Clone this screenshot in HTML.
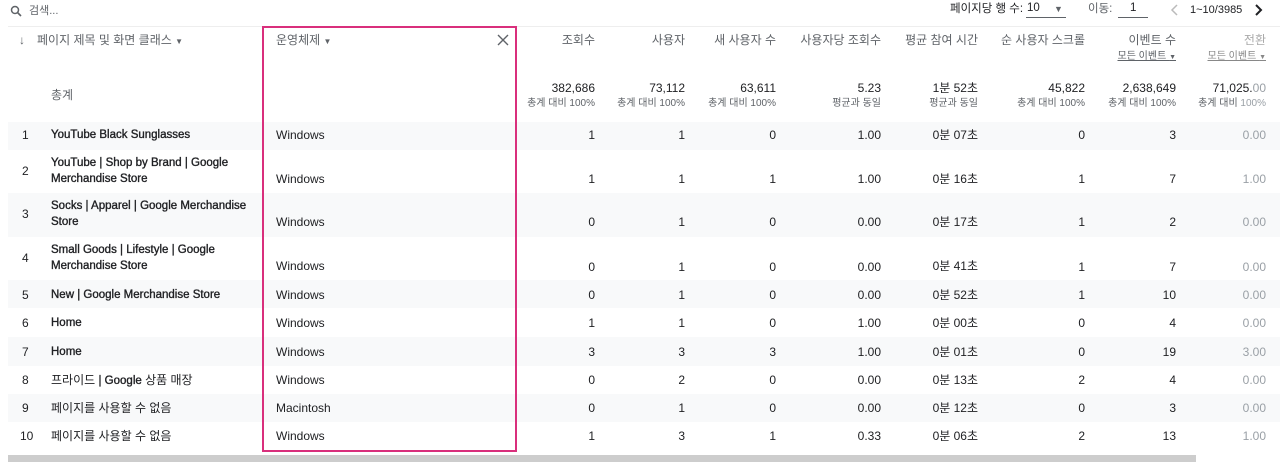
<!DOCTYPE html>
<html><head><meta charset="utf-8"><style>
*{margin:0;padding:0;box-sizing:border-box}
body{width:1280px;height:462px;overflow:hidden;background:#fff;font-family:"Liberation Sans","Noto Sans CJK KR",sans-serif;color:#202124;position:relative;font-size:12px}
.a{position:absolute;line-height:16px;white-space:nowrap}
.r{position:absolute;left:8px;width:1272px}
.g{background:#f8f9fa}
.h{color:#5f6368;font-size:12px}
.s{font-size:10px;color:#5f6368}
.l{color:#9aa0a6}
.b{font-weight:normal;font-size:11.5px;-webkit-text-stroke:0.35px #202124}
</style></head><body>
<svg class="a" style="left:10px;top:5px" width="12" height="12" viewBox="0 0 12 12"><circle cx="5" cy="5" r="3.5" fill="none" stroke="#5f6368" stroke-width="1.5"/><path d="M7.5 7.5L11 11" stroke="#5f6368" stroke-width="1.6"/></svg>
<div class="a h" style="left:29px;top:3px;font-size:11px">검색...</div>
<div class="a" style="left:950px;top:1px;font-size:11.5px">페이지당 행 수:</div>
<div class="a" style="left:1027px;top:0px;font-size:11.5px">10</div>
<div class="a" style="left:1026px;top:17px;width:40px;border-top:1px solid #5f6368"></div>
<div class="a" style="left:1054px;top:1px;font-size:9px;color:#5f6368">▼</div>
<div class="a" style="left:1088px;top:1px;font-size:11.5px;color:#5f6368">이동:</div>
<div class="a" style="left:1130px;top:0px;font-size:11.5px">1</div>
<div class="a" style="left:1118px;top:17px;width:30px;border-top:1px solid #5f6368"></div>
<svg class="a" style="left:1170px;top:4px" width="10" height="12" viewBox="0 0 10 12"><path d="M7 1L2 6L7 11" fill="none" stroke="#bbb" stroke-width="1.5"/></svg>
<div class="a" style="left:1190px;top:2px;font-size:11px">1~10/3985</div>
<svg class="a" style="left:1254px;top:4px" width="10" height="12" viewBox="0 0 10 12"><path d="M2 1L7 6L2 11" fill="none" stroke="#202124" stroke-width="2"/></svg>
<div class="a" style="left:8px;top:26px;width:1272px;border-top:1px solid #eee"></div>
<div class="r g" style="top:122px;height:28px"></div>
<div class="r g" style="top:193px;height:44px"></div>
<div class="r g" style="top:280px;height:28px"></div>
<div class="r g" style="top:337px;height:29px"></div>
<div class="r g" style="top:394px;height:28px"></div>
<div class="a h" style="left:19px;top:32px;font-size:12px;font-weight:bold">↓</div>
<div class="a h" style="left:37px;top:32px">페이지 제목 및 화면 클래스 <span style="font-size:8px">▼</span></div>
<div class="a h" style="left:276px;top:32px">운영체제 <span style="font-size:8px">▼</span></div>
<svg class="a" style="left:497px;top:34px" width="12" height="12" viewBox="0 0 12 12"><path d="M1 1L11 11M11 1L1 11" stroke="#5f6368" stroke-width="1.4"/></svg>
<div class="a h" style="right:685px;top:32px">조회수</div>
<div class="a h" style="right:595px;top:32px">사용자</div>
<div class="a h" style="right:504px;top:32px">새 사용자 수</div>
<div class="a h" style="right:399px;top:32px">사용자당 조회수</div>
<div class="a h" style="right:302px;top:32px">평균 참여 시간</div>
<div class="a h" style="right:195px;top:32px">순 사용자 스크롤</div>
<div class="a h" style="right:104px;top:32px">이벤트 수</div>
<div class="a h" style="right:14px;top:32px;color:#aaa">전환</div>
<div class="a s" style="right:104px;top:49px;text-decoration:underline">모든 이벤트 <span style="font-size:7px;text-decoration:none">▼</span></div>
<div class="a s" style="right:14px;top:49px;text-decoration:underline;color:#888">모든 이벤트 <span style="font-size:7px">▼</span></div>
<div class="a" style="left:51px;top:87px;color:#5f6368">총계</div>
<div class="a" style="right:685px;top:80px">382,686</div><div class="a s" style="right:685px;top:96px">총계 대비 100%</div>
<div class="a" style="right:595px;top:80px">73,112</div><div class="a s" style="right:595px;top:96px">총계 대비 100%</div>
<div class="a" style="right:504px;top:80px">63,611</div><div class="a s" style="right:504px;top:96px">총계 대비 100%</div>
<div class="a" style="right:399px;top:80px">5.23</div><div class="a s" style="right:399px;top:96px">평균과 동일</div>
<div class="a" style="right:302px;top:80px">1분 52초</div><div class="a s" style="right:302px;top:96px">평균과 동일</div>
<div class="a" style="right:195px;top:80px">45,822</div><div class="a s" style="right:195px;top:96px">총계 대비 100%</div>
<div class="a" style="right:104px;top:80px">2,638,649</div><div class="a s" style="right:104px;top:96px">총계 대비 100%</div>
<div class="a" style="right:14px;top:80px">71,025.<span class="l">00</span></div><div class="a s" style="right:14px;top:96px">총계 대비 <span class="l">100%</span></div>

<div class="a" style="left:22px;top:127px">1</div><div class="a b" style="left:51px;top:127px">YouTube Black Sunglasses</div><div class="a" style="left:276px;top:127px">Windows</div>
<div class="a" style="right:685px;top:127px">1</div><div class="a" style="right:595px;top:127px">1</div><div class="a" style="right:504px;top:127px">0</div><div class="a" style="right:399px;top:127px">1.00</div><div class="a" style="right:302px;top:127px">0분 07초</div><div class="a" style="right:195px;top:127px">0</div><div class="a" style="right:104px;top:127px">3</div><div class="a l" style="right:14px;top:127px">0.00</div>
<div class="a" style="left:22px;top:163px">2</div><div class="a b" style="left:51px;top:155px">YouTube | Shop by Brand | Google</div><div class="a b" style="left:51px;top:171px">Merchandise Store</div><div class="a" style="left:276px;top:171px">Windows</div>
<div class="a" style="right:685px;top:171px">1</div><div class="a" style="right:595px;top:171px">1</div><div class="a" style="right:504px;top:171px">1</div><div class="a" style="right:399px;top:171px">1.00</div><div class="a" style="right:302px;top:171px">0분 16초</div><div class="a" style="right:195px;top:171px">1</div><div class="a" style="right:104px;top:171px">7</div><div class="a l" style="right:14px;top:171px">1.00</div>
<div class="a" style="left:22px;top:206px">3</div><div class="a b" style="left:51px;top:198px">Socks | Apparel | Google Merchandise</div><div class="a b" style="left:51px;top:214px">Store</div><div class="a" style="left:276px;top:214px">Windows</div>
<div class="a" style="right:685px;top:214px">0</div><div class="a" style="right:595px;top:214px">1</div><div class="a" style="right:504px;top:214px">0</div><div class="a" style="right:399px;top:214px">0.00</div><div class="a" style="right:302px;top:214px">0분 17초</div><div class="a" style="right:195px;top:214px">1</div><div class="a" style="right:104px;top:214px">2</div><div class="a l" style="right:14px;top:214px">0.00</div>
<div class="a" style="left:22px;top:250px">4</div><div class="a b" style="left:51px;top:242px">Small Goods | Lifestyle | Google</div><div class="a b" style="left:51px;top:258px">Merchandise Store</div><div class="a" style="left:276px;top:258px">Windows</div>
<div class="a" style="right:685px;top:259px">0</div><div class="a" style="right:595px;top:259px">1</div><div class="a" style="right:504px;top:259px">0</div><div class="a" style="right:399px;top:259px">0.00</div><div class="a" style="right:302px;top:258px">0분 41초</div><div class="a" style="right:195px;top:259px">1</div><div class="a" style="right:104px;top:259px">7</div><div class="a l" style="right:14px;top:259px">0.00</div>
<div class="a" style="left:22px;top:287px">5</div><div class="a b" style="left:51px;top:287px">New | Google Merchandise Store</div><div class="a" style="left:276px;top:287px">Windows</div>
<div class="a" style="right:685px;top:287px">0</div><div class="a" style="right:595px;top:287px">1</div><div class="a" style="right:504px;top:287px">0</div><div class="a" style="right:399px;top:287px">0.00</div><div class="a" style="right:302px;top:287px">0분 52초</div><div class="a" style="right:195px;top:287px">1</div><div class="a" style="right:104px;top:287px">10</div><div class="a l" style="right:14px;top:287px">0.00</div>
<div class="a" style="left:22px;top:315px">6</div><div class="a b" style="left:51px;top:315px">Home</div><div class="a" style="left:276px;top:315px">Windows</div>
<div class="a" style="right:685px;top:315px">1</div><div class="a" style="right:595px;top:315px">1</div><div class="a" style="right:504px;top:315px">0</div><div class="a" style="right:399px;top:315px">1.00</div><div class="a" style="right:302px;top:315px">0분 00초</div><div class="a" style="right:195px;top:315px">0</div><div class="a" style="right:104px;top:315px">4</div><div class="a l" style="right:14px;top:315px">0.00</div>
<div class="a" style="left:22px;top:344px">7</div><div class="a b" style="left:51px;top:344px">Home</div><div class="a" style="left:276px;top:344px">Windows</div>
<div class="a" style="right:685px;top:344px">3</div><div class="a" style="right:595px;top:344px">3</div><div class="a" style="right:504px;top:344px">3</div><div class="a" style="right:399px;top:344px">1.00</div><div class="a" style="right:302px;top:344px">0분 01초</div><div class="a" style="right:195px;top:344px">0</div><div class="a" style="right:104px;top:344px">19</div><div class="a l" style="right:14px;top:344px">3.00</div>
<div class="a" style="left:22px;top:372px">8</div><div class="a" style="left:51px;top:372px">프라이드 <span class="b">| Google</span> 상품 매장</div><div class="a" style="left:276px;top:372px">Windows</div>
<div class="a" style="right:685px;top:372px">0</div><div class="a" style="right:595px;top:372px">2</div><div class="a" style="right:504px;top:372px">0</div><div class="a" style="right:399px;top:372px">0.00</div><div class="a" style="right:302px;top:372px">0분 13초</div><div class="a" style="right:195px;top:372px">2</div><div class="a" style="right:104px;top:372px">4</div><div class="a l" style="right:14px;top:372px">0.00</div>
<div class="a" style="left:22px;top:400px">9</div><div class="a" style="left:51px;top:400px">페이지를 사용할 수 없음</div><div class="a" style="left:276px;top:400px">Macintosh</div>
<div class="a" style="right:685px;top:400px">0</div><div class="a" style="right:595px;top:400px">1</div><div class="a" style="right:504px;top:400px">0</div><div class="a" style="right:399px;top:400px">0.00</div><div class="a" style="right:302px;top:400px">0분 12초</div><div class="a" style="right:195px;top:400px">0</div><div class="a" style="right:104px;top:400px">3</div><div class="a l" style="right:14px;top:400px">0.00</div>
<div class="a" style="left:20px;top:428px">10</div><div class="a" style="left:51px;top:428px">페이지를 사용할 수 없음</div><div class="a" style="left:276px;top:428px">Windows</div>
<div class="a" style="right:685px;top:428px">1</div><div class="a" style="right:595px;top:428px">3</div><div class="a" style="right:504px;top:428px">1</div><div class="a" style="right:399px;top:428px">0.33</div><div class="a" style="right:302px;top:428px">0분 06초</div><div class="a" style="right:195px;top:428px">2</div><div class="a" style="right:104px;top:428px">13</div><div class="a l" style="right:14px;top:428px">1.00</div>

<div class="a" style="left:262px;top:26px;width:255px;height:426px;border:2px solid #d92f7c"></div>
<div class="a" style="left:8px;top:455px;width:1188px;height:7px;background:#cdcdcd"></div>
</body></html>
